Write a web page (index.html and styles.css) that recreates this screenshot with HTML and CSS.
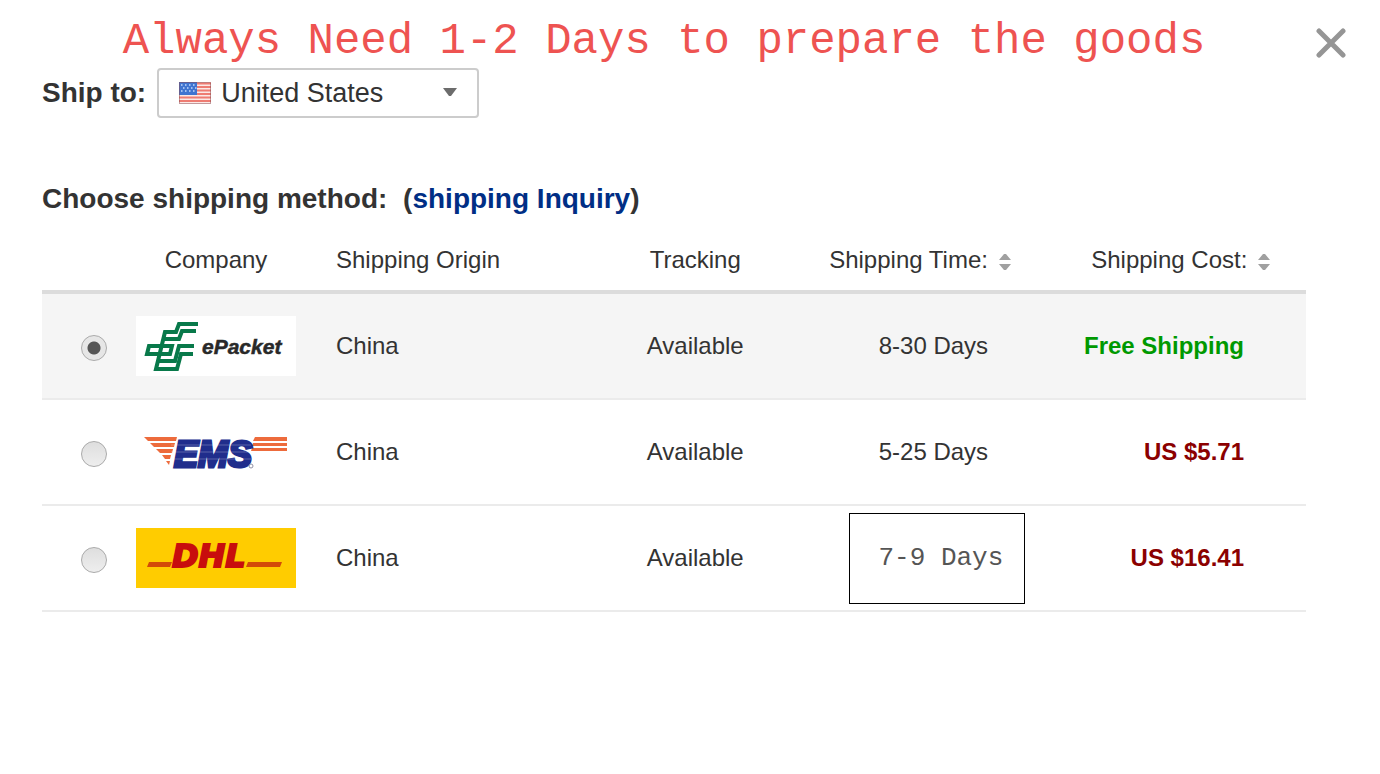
FILE: index.html
```html
<!DOCTYPE html>
<html lang="en">
<head>
    <meta charset="UTF-8">
    <meta name="viewport" content="width=device-width, initial-scale=1.0">
    <title>Shipping Methods</title>
    <link rel="stylesheet" href="styles.css">
</head>
<body>
    <div class="topbar">
        <h1>Always Need 1-2 Days to prepare the goods</h1>
        <button type="button" class="close" aria-label="Close">
            <svg width="30" height="30" viewBox="0 0 30 30"><path d="M3 3L27 27M27 3L3 27" stroke="#959595" stroke-width="5" stroke-linecap="round"/></svg>
        </button>
    </div>

    <form class="shipping">
        <div class="ship-to">
            <label for="country">Ship to:</label>
            <div class="select-box">
                <svg class="flag" width="32" height="22" viewBox="0 0 32 22">
                    <rect width="32" height="22" fill="#fbe9e6"/>
                    <path d="M0 1.5H32M0 5H32M0 8.5H32M0 12H32M0 15.5H32M0 19H32" stroke="#ee7c72" stroke-width="2"/>
                    <rect width="18" height="13" fill="#3f74d0"/>
                    <path d="M2 3H18M4 6H18M2 9H18" stroke="#c4d9fa" stroke-width="1.5" stroke-dasharray="1.5 2.5"/>
                    <rect x=".5" y=".5" width="31" height="21" fill="none" stroke="#8a4a50" stroke-opacity=".5"/>
                </svg>
                <select id="country">
                    <option>United States</option>
                </select>
                <svg class="arrow" width="16" height="10" viewBox="0 0 16 10"><path d="M1 0H15L9 8H7Z" fill="#6c6c6c"/></svg>
            </div>
        </div>

        <h2>Choose shipping method: <span class="inquiry">(<a href="#">shipping Inquiry</a>)</span></h2>

        <table>
            <thead>
                <tr>
                    <th class="pick"></th>
                    <th class="company">Company</th>
                    <th class="origin">Shipping Origin</th>
                    <th class="tracking">Tracking</th>
                    <th class="time">Shipping Time: <svg class="sort" width="14" height="18" viewBox="0 0 14 18"><path d="M1 7L6 1H8L13 7ZM1 11L6 17H8L13 11Z" fill="#a0a0a0"/></svg></th>
                    <th class="cost">Shipping Cost: <svg class="sort" width="14" height="18" viewBox="0 0 14 18"><path d="M1 7L6 1H8L13 7ZM1 11L6 17H8L13 11Z" fill="#a0a0a0"/></svg></th>
                </tr>
            </thead>
            <tbody>
                <tr class="selected">
                    <td class="pick"><input type="radio" name="method" aria-label="ePacket" checked></td>
                    <td class="company">
                        <svg class="logo" width="160" height="60" viewBox="0 0 160 60">
                            <rect width="160" height="60" fill="#fff"/>
                            <g fill="none" stroke="#08794a" stroke-width="4">
                                <path d="M62 8H43L40 16H29L20 53H41L45 38H57"/>
                                <path d="M60 15H46L43 23H28"/>
                                <path d="M13 30H36L34 38H11Z"/>
                                <path d="M58 30H43L39 45H23"/>
                            </g>
                            <text x="66" y="38" font-size="21" class="logo-text" fill="#292929" stroke="#292929" stroke-width=".5">ePacket</text>
                        </svg>
                    </td>
                    <td class="origin">China</td>
                    <td class="tracking">Available</td>
                    <td class="time">8-30 Days</td>
                    <td class="cost free">Free Shipping</td>
                </tr>
                <tr>
                    <td class="pick"><input type="radio" name="method" aria-label="EMS"></td>
                    <td class="company">
                        <svg class="logo" width="160" height="60" viewBox="0 0 160 60">
                            <g fill="#ed6b3c">
                                <path d="M8 15H41L40 19H12ZM14 21H39L38 25H18ZM20 27H37L36 31H24ZM26 33H35L34 37H29ZM30 39H34L33 43Z"/>
                                <path d="M119 15H151V19H117ZM117 21H151V24H116ZM116 26H151V29H115Z"/>
                            </g>
                            <text x="38" y="45" font-size="36" class="logo-text" fill="#202d8c" stroke="#202d8c" stroke-width="3">EMS</text>
                            <path d="M35 23H115M35 30H115M35 37H115" stroke="#fff" stroke-opacity=".25"/>
                            <circle cx="115" cy="44" r="2" fill="none" stroke="#9191a6"/>
                        </svg>
                    </td>
                    <td class="origin">China</td>
                    <td class="tracking">Available</td>
                    <td class="time">5-25 Days</td>
                    <td class="cost">US $5.71</td>
                </tr>
                <tr>
                    <td class="pick"><input type="radio" name="method" aria-label="DHL"></td>
                    <td class="company">
                        <svg class="logo" width="160" height="60" viewBox="0 0 160 60">
                            <rect width="160" height="60" fill="#fc0"/>
                            <path d="M13 34H36L34 39H11ZM112 34H146L144 39H110Z" fill="#d34b08"/>
                            <text x="36" y="39" font-size="32" class="logo-text wide" fill="#c80d0d" stroke="#c80d0d" stroke-width="2">DHL</text>
                        </svg>
                    </td>
                    <td class="origin">China</td>
                    <td class="tracking">Available</td>
                    <td class="time"><span class="note">7-9 Days</span></td>
                    <td class="cost">US $16.41</td>
                </tr>
            </tbody>
        </table>
    </form>
</body>
</html>
```
FILE: styles.css
```css
body {
    margin: 0;
    font-family: "Liberation Sans", Arial, sans-serif;
    font-size: 24px;
    color: #333;
    background-color: #fff;
}
.topbar {
    display: flex;
    align-items: center;
    padding: 18px 34px 0 42px;
}
h1 {
    flex: 1;
    margin: 0;
    padding: 0 30px 4px 0;
    font-family: "Liberation Mono", monospace;
    font-size: 44px;
    line-height: 46px;
    font-weight: normal;
    text-align: center;
    color: #ee5351;
}
.close {
    display: flex;
    padding: 0;
    border: none;
    background: none;
    cursor: pointer;
}
.shipping {
    padding: 0 74px 0 42px;
}
.ship-to {
    display: flex;
    align-items: center;
    gap: 11px;
}
.ship-to label {
    font-size: 28px;
    font-weight: bold;
}
.select-box {
    position: relative;
    width: 322px;
}
.select-box select {
    appearance: none;
    display: block;
    width: 100%;
    height: 50px;
    padding: 0 40px 0 62px;
    border: 2px solid #ccc;
    border-radius: 4px;
    background-color: #fff;
    font-family: inherit;
    font-size: 27px;
    color: #333;
}
.flag {
    position: absolute;
    top: 14px;
    left: 22px;
}
.arrow {
    position: absolute;
    top: 20px;
    right: 21px;
    pointer-events: none;
}
h2 {
    margin: 64px 0 14px;
    font-size: 28px;
    line-height: 34px;
}
.inquiry {
    margin-left: 8px;
}
h2 a {
    color: #002e85;
    text-decoration: none;
}
table {
    width: 100%;
    table-layout: fixed;
    border-collapse: separate;
    border-spacing: 0;
}
th, td {
    box-sizing: border-box;
    padding: 0;
    text-align: left;
    white-space: nowrap;
}
th {
    height: 64px;
    border-bottom: 4px solid #dcdcdc;
    font-weight: normal;
}
td {
    height: 106px;
    border-bottom: 2px solid #ebebeb;
}
.selected td {
    background-color: #f5f5f5;
}
.pick {
    width: 94px;
}
.company {
    width: 200px;
}
th.company {
    padding-right: 40px;
    text-align: center;
}
.origin {
    width: 20%;
}
.tracking {
    width: 17%;
    padding-right: 2px;
    text-align: center;
}
.time {
    width: 21%;
    padding-right: 6px;
    text-align: center;
}
th.time {
    padding-right: 32px;
}
.cost {
    padding-right: 62px;
    text-align: right;
    font-weight: bold;
    color: #8b0000;
}
th.cost {
    padding-right: 35px;
    font-weight: normal;
    color: #333;
}
.cost.free {
    color: #090;
}
.sort {
    margin-left: 3px;
    vertical-align: -3px;
}
.pick input {
    appearance: none;
    display: block;
    box-sizing: border-box;
    width: 26px;
    height: 26px;
    margin: 4px 0 0 39px;
    border: 1px solid #aaa;
    border-radius: 50%;
    background: linear-gradient(#dedede, #eee);
}
.pick input:checked {
    background: radial-gradient(circle, #555 6px, #e6e6e6 7px);
}
.logo {
    display: block;
}
.logo-text {
    font-family: "Liberation Sans", Arial, sans-serif;
    font-weight: bold;
    font-style: italic;
}
.logo-text.wide {
    font-family: "DejaVu Sans", Verdana, sans-serif;
}
.note {
    display: inline-block;
    margin-left: 8px;
    padding: 0 21px 0 28px;
    border: 1px solid #000;
    font-family: "Liberation Mono", monospace;
    font-size: 26px;
    line-height: 89px;
    color: #555;
}
```
